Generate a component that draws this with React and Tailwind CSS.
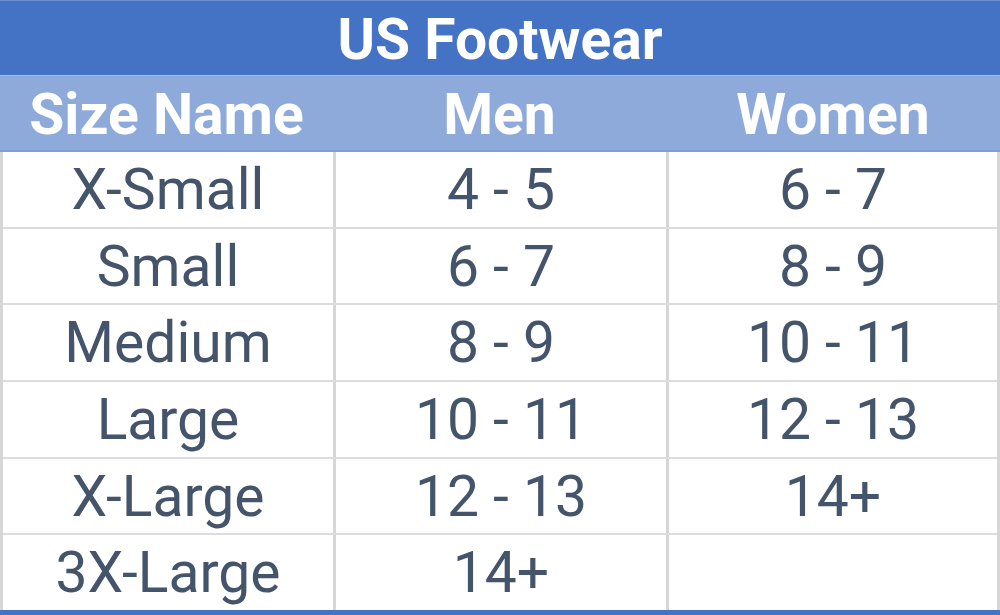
export default function App() {
  const rows = [
    ["X-Small", "4 - 5", "6 - 7"],
    ["Small", "6 - 7", "8 - 9"],
    ["Medium", "8 - 9", "10 - 11"],
    ["Large", "10 - 11", "12 - 13"],
    ["X-Large", "12 - 13", "14+"],
    ["3X-Large", "14+", ""],
  ];
  return (
    <div
      className="w-[1000px] h-[615px] flex flex-col bg-white overflow-hidden"
      style={{ fontFamily: "Roboto, 'Noto Sans', sans-serif" }}
    >
      <div className="h-[75px] shrink-0 bg-[#4472c4] border-t border-[#6b8fd0] flex items-center justify-center pt-[2px] text-white font-bold text-[57px] leading-none">
        US Footwear
      </div>
      <div className="h-[77px] shrink-0 bg-[#8eaadb] border-t border-[#a4bce4] border-b-2 border-b-[#7f9dd2] grid grid-cols-[333px_333px_334px] text-white font-bold text-[57px] leading-none">
        <div className="flex items-center justify-center pt-[3px]">Size Name</div>
        <div className="flex items-center justify-center pt-[3px]">Men</div>
        <div className="flex items-center justify-center pt-[3px]">Women</div>
      </div>
      <div className="flex-1 flex flex-col border-l-[3px] border-r-[3px] border-[#d6d6d6]">
        {rows.map((r, i) => (
          <div
            key={i}
            className={`flex-1 grid grid-cols-[330px_333px_331px] text-[#44546a] text-[57px] leading-none ${i < rows.length - 1 ? "border-b-2 border-[#dcdcdc]" : ""}`}
          >
            <div className="flex items-center justify-center">{r[0]}</div>
            <div className="flex items-center justify-center border-l-[3px] border-[#d6d6d6]">{r[1]}</div>
            <div className="flex items-center justify-center border-l-[3px] border-[#d6d6d6]">{r[2]}</div>
          </div>
        ))}
      </div>
      <div className="h-[5px] shrink-0 bg-[#4472c4]" />
    </div>
  );
}
